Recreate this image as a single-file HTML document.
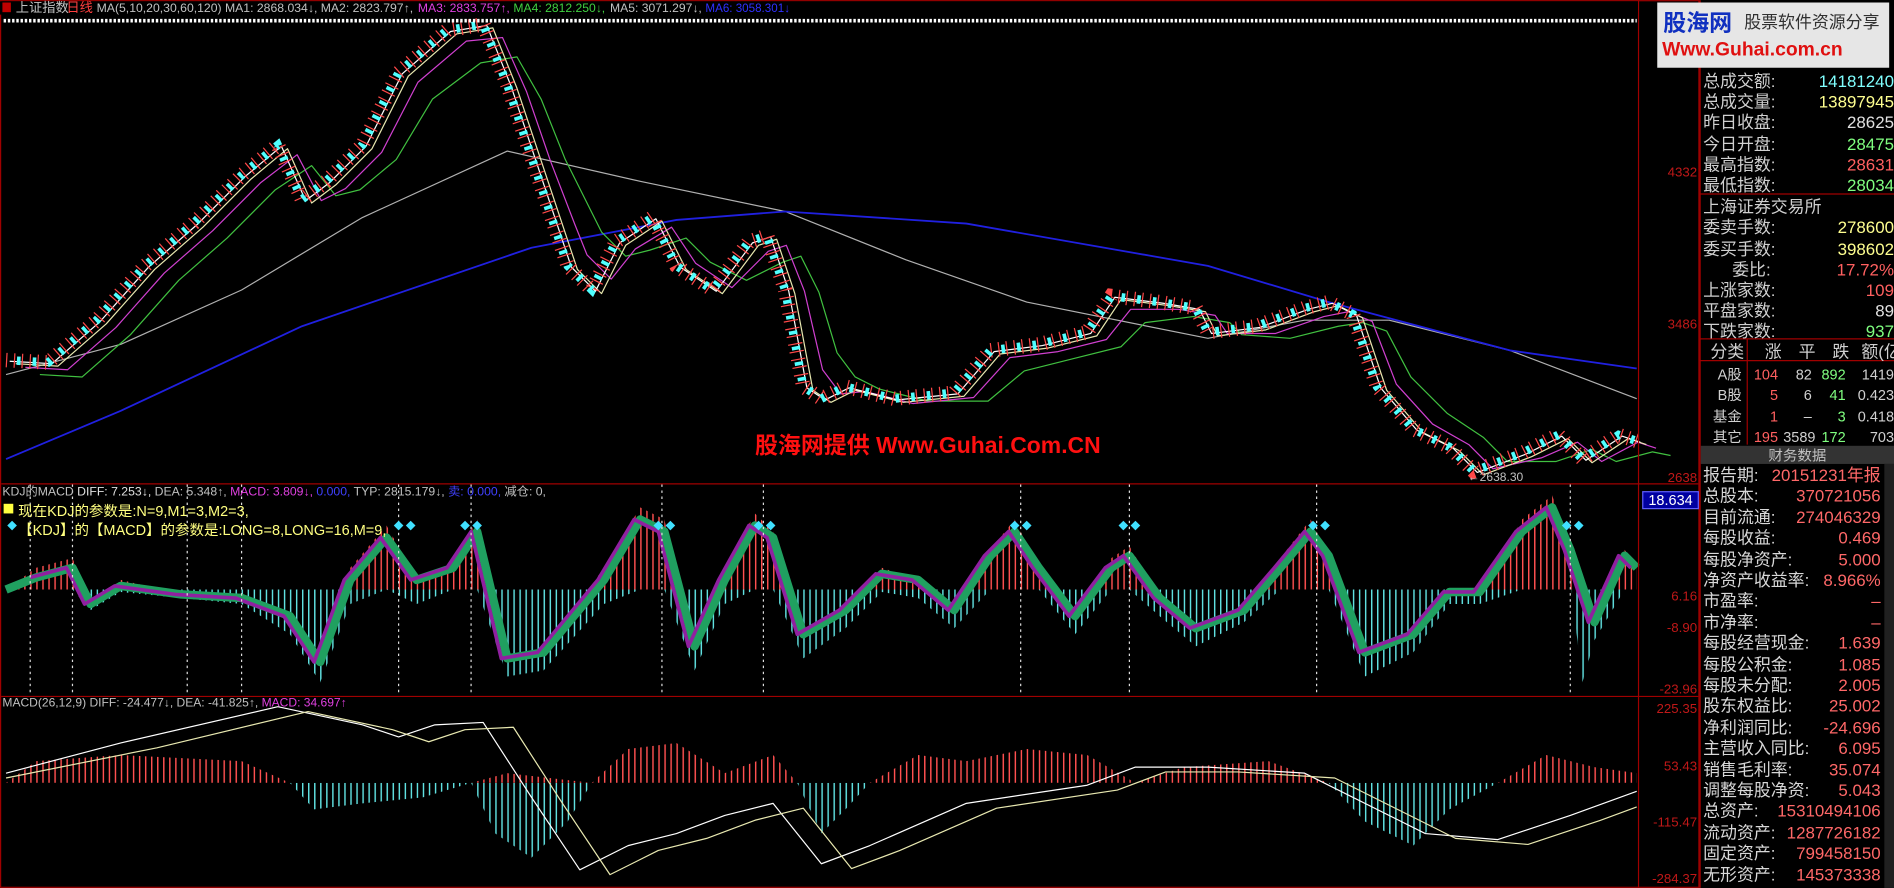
<!DOCTYPE html>
<html><head><meta charset="utf-8"><style>
html,body{margin:0;padding:0;background:#000;overflow:hidden}
svg{display:block}
text{font-family:"Liberation Sans","Noto Sans CJK SC",sans-serif}
</style></head><body>
<svg width="1894" height="888" viewBox="0 0 1568 735" xmlns="http://www.w3.org/2000/svg">
<defs>
<pattern id="pr" width="5" height="10" patternUnits="userSpaceOnUse"><rect x="0" y="0" width="1.2" height="10" fill="#ff5050"/></pattern>
<pattern id="pc" width="5" height="10" patternUnits="userSpaceOnUse"><rect x="0" y="0" width="1.2" height="10" fill="#60e0e0"/></pattern>
<clipPath id="upK"><rect x="0" y="400" width="1356" height="88"/></clipPath>
<clipPath id="dnK"><rect x="0" y="488" width="1356" height="88"/></clipPath>
<clipPath id="upM"><rect x="0" y="577" width="1356" height="71"/></clipPath>
<clipPath id="dnM"><rect x="0" y="648" width="1356" height="87"/></clipPath>
</defs>
<rect width="1568" height="735" fill="#000"/>

<polyline fill="none" stroke="#b0b0b0" stroke-width="1" stroke-linejoin="round" points="5,310 100,285 200,240 300,180 420,125 530,150 650,175 750,215 850,250 1000,280 1080,265 1150,265 1250,290 1355,330"/>
<polyline fill="none" stroke="#2020e0" stroke-width="1.5" stroke-linejoin="round" points="5,380 100,340 250,270 440,205 560,182 650,175 800,185 1000,220 1100,250 1250,290 1355,305"/>
<g fill="none" stroke-width="1" stroke-linejoin="round">
<polyline transform="translate(28,12)" stroke="#40c040" points="5,298 40,300 80,265 120,220 160,185 200,145 230,125 250,150 270,145 300,120 330,70 370,40 400,35 420,70 440,120 460,160 470,180 490,200 510,195 540,185 560,205 590,220 620,205 635,200 650,230 665,280 680,300 700,310 740,320 790,320 820,295 860,285 900,275 920,255 960,250 990,255 1000,265 1040,268 1080,258 1100,255 1120,262 1140,300 1170,330 1200,350 1220,370 1260,370 1290,360 1310,370 1340,362 1355,365"/>
<polyline transform="translate(16,6)" stroke="#d040d0" points="5,298 40,300 80,265 120,220 160,185 200,145 230,122 250,160 270,150 300,120 330,62 370,28 400,25 420,70 440,128 460,180 470,205 490,225 510,200 540,182 560,212 590,232 620,202 635,197 650,235 665,300 680,320 700,318 740,328 790,323 820,290 860,285 900,275 920,250 960,250 990,255 1000,270 1040,270 1080,256 1100,252 1120,260 1140,312 1170,345 1200,362 1220,382 1260,373 1290,360 1310,376 1340,360 1355,365"/>
<polyline transform="translate(8,3)" stroke="#e8e8b0" points="5,298 40,300 80,265 120,220 160,185 200,145 230,120 250,165 270,150 300,120 330,60 370,25 400,20 420,70 440,130 460,190 470,220 490,240 510,200 540,180 560,220 590,240 620,200 635,195 650,240 665,320 680,330 700,320 740,330 790,325 820,290 860,285 900,275 920,245 960,250 990,255 1000,275 1040,270 1080,255 1100,250 1120,260 1140,320 1170,355 1200,370 1220,390 1260,375 1290,360 1310,380 1340,360 1355,365"/>
<polyline transform="translate(3,1)" stroke="#ffffff" points="5,298 40,300 80,265 120,220 160,185 200,145 230,120 250,165 270,150 300,120 330,60 370,25 400,20 420,70 440,130 460,190 470,220 490,240 510,200 540,180 560,220 590,240 620,200 635,195 650,240 665,320 680,330 700,320 740,330 790,325 820,290 860,285 900,275 920,245 960,250 990,255 1000,275 1040,270 1080,255 1100,250 1120,260 1140,320 1170,355 1200,370 1220,390 1260,375 1290,360 1310,380 1340,360 1355,365"/>
</g>
<polyline fill="none" stroke="#ff4848" stroke-width="12" stroke-dasharray="1 5.5" points="5,298 40,300 80,265 120,220 160,185 200,145 230,120 250,165 270,150 300,120 330,60 370,25 400,20 420,70 440,130 460,190 470,220 490,240 510,200 540,180 560,220 590,240 620,200 635,195 650,240 665,320 680,330 700,320 740,330 790,325 820,290 860,285 900,275 920,245 960,250 990,255 1000,275 1040,270 1080,255 1100,250 1120,260 1140,320 1170,355 1200,370 1220,390 1260,375 1290,360 1310,380 1340,360 1355,365"/>
<polyline fill="none" stroke="#50ffff" stroke-width="7" stroke-dasharray="3 10" stroke-dashoffset="4" points="5,298 40,300 80,265 120,220 160,185 200,145 230,120 250,165 270,150 300,120 330,60 370,25 400,20 420,70 440,130 460,190 470,220 490,240 510,200 540,180 560,220 590,240 620,200 635,195 650,240 665,320 680,330 700,320 740,330 790,325 820,290 860,285 900,275 920,245 960,250 990,255 1000,275 1040,270 1080,255 1100,250 1120,260 1140,320 1170,355 1200,370 1220,390 1260,375 1290,360 1310,380 1340,360 1355,365"/>

<polygon fill="url(#pr)" clip-path="url(#upK)" points="5,488 5,488 30,470 60,462 75,500 100,480 150,492 200,495 240,510 265,548 290,470 320,435 345,480 375,465 395,430 420,545 450,540 500,470 530,420 550,430 575,535 600,470 625,425 640,440 665,525 700,505 730,470 760,480 790,505 820,455 840,430 860,470 890,510 920,462 935,452 960,495 990,520 1030,505 1060,462 1085,430 1100,460 1130,540 1170,525 1200,490 1225,490 1260,430 1285,410 1300,455 1320,515 1345,455 1355,470 1355,488"/>
<polygon fill="url(#pc)" clip-path="url(#dnK)" points="5,488 30,488 60,488 75,505 100,490 150,495 200,500 240,525 265,565 290,500 320,488 345,500 375,488 395,488 420,560 450,555 500,500 530,488 550,488 575,555 600,500 625,488 640,488 665,545 700,520 730,490 760,495 790,520 820,488 840,488 860,488 890,525 920,488 935,488 960,510 990,535 1030,515 1060,488 1085,488 1100,488 1130,560 1170,540 1200,500 1225,500 1260,488 1285,488 1300,480 1310,565 1320,530 1345,488 1355,488"/>
<polyline fill="none" stroke="#20a060" stroke-width="7" stroke-linejoin="round" points="5,488 30,478 60,470 75,500 100,485 150,492 200,495 240,510 265,548 290,480 320,445 345,480 375,470 395,440 420,545 450,540 500,480 530,430 550,440 575,535 600,480 625,435 640,445 665,525 700,505 730,475 760,480 790,505 820,460 840,440 860,470 890,510 920,470 935,460 960,495 990,520 1030,505 1060,470 1085,440 1100,460 1130,540 1170,525 1200,490 1225,490 1260,440 1285,420 1300,455 1320,515 1345,460 1355,470"/>
<polyline transform="translate(-5,0)" fill="none" stroke="#9020a0" stroke-width="3" stroke-linejoin="round" points="30,478 60,470 75,500 100,485 150,492 200,495 240,510 265,548 290,480 320,445 345,480 375,470 395,440 420,545 450,540 500,480 530,430 550,440 575,535 600,480 625,435 640,445 665,525 700,505 730,475 760,480 790,505 820,460 840,440 860,470 890,510 920,470 935,460 960,495 990,520 1030,505 1060,470 1085,440 1100,460 1130,540 1170,525 1200,490 1225,490 1260,440 1285,420 1300,455 1320,515 1345,460 1355,470"/>
<g stroke="#ddd" stroke-dasharray="2 3">
<line x1="25" y1="401" x2="25" y2="575"/><line x1="60" y1="401" x2="60" y2="575"/><line x1="155" y1="401" x2="155" y2="575"/><line x1="200" y1="401" x2="200" y2="575"/><line x1="330" y1="401" x2="330" y2="575"/><line x1="390" y1="401" x2="390" y2="575"/><line x1="548" y1="401" x2="548" y2="575"/><line x1="632" y1="401" x2="632" y2="575"/><line x1="845" y1="401" x2="845" y2="575"/><line x1="935" y1="401" x2="935" y2="575"/><line x1="1090" y1="401" x2="1090" y2="575"/><line x1="1300" y1="401" x2="1300" y2="575"/>
</g>
<g fill="#40e0ff">
<path d="M330,431l4,4l-4,4l-4,-4z M340,431l4,4l-4,4l-4,-4z M385,431l4,4l-4,4l-4,-4z M395,431l4,4l-4,4l-4,-4z M545,431l4,4l-4,4l-4,-4z M555,431l4,4l-4,4l-4,-4z M628,431l4,4l-4,4l-4,-4z M638,431l4,4l-4,4l-4,-4z M840,431l4,4l-4,4l-4,-4z M850,431l4,4l-4,4l-4,-4z M930,431l4,4l-4,4l-4,-4z M940,431l4,4l-4,4l-4,-4z M1087,431l4,4l-4,4l-4,-4z M1097,431l4,4l-4,4l-4,-4z M1297,431l4,4l-4,4l-4,-4z M1307,431l4,4l-4,4l-4,-4z M10,431l4,4l-4,4l-4,-4z"/>
</g>

<polygon fill="url(#pr)" clip-path="url(#upM)" points="5,648 30,630 100,625 200,630 240,648 390,648 420,640 490,648 520,620 560,615 600,640 640,625 660,648 720,648 760,625 800,630 850,620 900,625 940,648 980,635 1050,630 1100,648 1240,648 1280,625 1320,635 1355,640 1355,648"/>
<polygon fill="url(#pc)" clip-path="url(#dnM)" points="5,648 240,648 260,670 300,665 350,660 390,648 410,690 440,710 470,680 490,648 600,648 660,648 680,690 700,670 720,648 940,648 1100,648 1130,680 1170,700 1200,670 1240,648 1355,648"/>
<polyline fill="none" stroke="#ffffff" stroke-linejoin="round" points="5,640 100,615 230,585 300,600 330,610 360,600 400,598 440,660 480,720 520,700 560,690 600,675 640,665 680,715 720,700 800,665 900,650 940,635 1000,635 1080,640 1180,690 1240,695 1300,675 1355,655"/>
<polyline fill="none" stroke="#e8e8b0" stroke-linejoin="round" points="5,644 130,619 255,589 325,604 355,614 385,604 425,602 465,664 505,724 545,704 585,694 625,679 665,669 705,719 745,704 825,669 925,654 965,639 1025,639 1105,644 1205,694 1265,699 1325,679 1355,668"/>

<g stroke="#a00000" fill="none" stroke-width="1">
<rect x="0.5" y="0.5" width="1406" height="734"/>
<line x1="1" y1="400.5" x2="1406" y2="400.5"/>
<line x1="1" y1="576.5" x2="1406" y2="576.5"/>
<line x1="1356.5" y1="0" x2="1356.5" y2="735"/>
<line x1="1407.5" y1="0" x2="1407.5" y2="735"/>
<line x1="1407" y1="160.5" x2="1568" y2="160.5"/>
<line x1="1407" y1="280.5" x2="1568" y2="280.5"/>
<line x1="1407" y1="298.5" x2="1568" y2="298.5"/>
<line x1="1446.5" y1="281" x2="1446.5" y2="368"/>
</g>
<rect x="0" y="1" width="1356" height="11" fill="#000"/>
<g font-size="10">
<rect x="2" y="2" width="7" height="8" fill="#c00000"/>
<text x="13" y="10" fill="#c0c0c0" font-size="11">上证指数</text>
<text x="55" y="10" fill="#ff4040" font-size="11">日线</text>
<text x="80" y="10" fill="#c0c0c0" textLength="262" lengthAdjust="spacingAndGlyphs">MA(5,10,20,30,60,120)  MA1: 2868.034↓, MA2: 2823.797↑,</text>
<text x="346" y="10" fill="#e040e0" textLength="76" lengthAdjust="spacingAndGlyphs">MA3: 2833.757↑,</text>
<text x="425" y="10" fill="#40d040" textLength="76" lengthAdjust="spacingAndGlyphs">MA4: 2812.250↓,</text>
<text x="505" y="10" fill="#c0c0c0" textLength="76" lengthAdjust="spacingAndGlyphs">MA5: 3071.297↓,</text>
<text x="584" y="10" fill="#3030ff" textLength="70" lengthAdjust="spacingAndGlyphs">MA6: 3058.301↓</text>
<text x="2" y="410" fill="#c0c0c0" textLength="450" lengthAdjust="spacingAndGlyphs">KDJ的MACD  <tspan fill="#e0e0e0">DIFF: 7.253↓,</tspan> <tspan fill="#c0c0c0">DEA: 5.348↑,</tspan> <tspan fill="#e040e0">MACD: 3.809↓,</tspan> <tspan fill="#4040ff">0.000,</tspan> TYP: 2815.179↓, <tspan fill="#4040ff">卖: 0.000,</tspan> 减仓: 0,</text>
<rect x="3" y="417" width="8" height="8" fill="#ffff40"/>
<text x="15" y="427" fill="#ffff80" font-size="12">现在KDJ的参数是:N=9,M1=3,M2=3,</text>
<text x="15" y="443" fill="#ffff80" font-size="12">【KDJ】的【MACD】的参数是:LONG=8,LONG=16,M=9,</text>
<text x="2" y="585" fill="#c0c0c0" textLength="285" lengthAdjust="spacingAndGlyphs">MACD(26,12,9) DIFF: -24.477↓, DEA: -41.825↑, <tspan fill="#e040e0">MACD: 34.697↑</tspan></text>
</g>
<line x1="3" y1="17" x2="1355" y2="17" stroke="#fff" stroke-width="3" stroke-dasharray="2 1.5"/>
<text x="625" y="375" fill="#ff1010" font-size="19" font-weight="bold">股海网提供 Www.Guhai.Com.CN</text>
<g fill="#c01818" font-size="11" text-anchor="end">
<text x="1405" y="146">4332</text><text x="1405" y="272">3486</text><text x="1405" y="399">2638</text>
<text x="1405" y="497">6.16</text><text x="1405" y="523">-8.90</text><text x="1405" y="574">-23.96</text>
<text x="1405" y="590">225.35</text><text x="1405" y="638">53.43</text><text x="1405" y="684">-115.47</text><text x="1405" y="731">-284.37</text>
</g>
<rect x="1360" y="407" width="46" height="14" fill="#0000a0" stroke="#6060ff"/>
<text x="1383" y="418" fill="#fff" font-size="12" text-anchor="middle">18.634</text>
<text x="1215" y="398" fill="#c0c0c0" font-size="10">←2638.30</text>
<text x="1410" y="50" fill="#d0d0d0" font-size="14">指数涨幅:</text>
<rect x="1372" y="2" width="192" height="54" fill="#e6e6e6"/>
<text x="1377" y="25" fill="#1030c0" font-size="19" font-weight="bold">股海网</text>
<text x="1444" y="23" fill="#303030" font-size="14">股票软件资源分享</text>
<text x="1376" y="46" fill="#e01010" font-size="16" font-weight="bold">Www.Guhai.com.cn</text>
<g font-size="14" fill="#d0d0d0">
<text x="1410" y="72">总成交额:</text><text x="1568" y="72" fill="#80ffff" text-anchor="end">14181240</text>
<text x="1410" y="89">总成交量:</text><text x="1568" y="89" fill="#ffff90" text-anchor="end">13897945</text>
<text x="1410" y="106">昨日收盘:</text><text x="1568" y="106" fill="#e0e0e0" text-anchor="end">28625</text>
<text x="1410" y="124">今日开盘:</text><text x="1568" y="124" fill="#80ff80" text-anchor="end">28475</text>
<text x="1410" y="141">最高指数:</text><text x="1568" y="141" fill="#ff6060" text-anchor="end">28631</text>
<text x="1410" y="158">最低指数:</text><text x="1568" y="158" fill="#80ff80" text-anchor="end">28034</text>
<text x="1410" y="176">上海证券交易所</text>
<text x="1410" y="193">委卖手数:</text><text x="1568" y="193" fill="#ffff90" text-anchor="end">278600</text>
<text x="1410" y="211">委买手数:</text><text x="1568" y="211" fill="#ffff90" text-anchor="end">398602</text>
<text x="1434" y="228">委比:</text><text x="1568" y="228" fill="#ff6060" text-anchor="end">17.72%</text>
<text x="1410" y="245">上涨家数:</text><text x="1568" y="245" fill="#ff6060" text-anchor="end">109</text>
<text x="1410" y="262">平盘家数:</text><text x="1568" y="262" fill="#e0e0e0" text-anchor="end">89</text>
<text x="1410" y="279">下跌家数:</text><text x="1568" y="279" fill="#80ff80" text-anchor="end">937</text>
<text x="1416" y="296">分类</text><text x="1461" y="296">涨</text><text x="1489" y="296">平</text><text x="1517" y="296">跌</text><text x="1541" y="296">额(亿</text>
<g font-size="12">
<text x="1442" y="314" text-anchor="end">A股</text><text x="1472" y="314" fill="#ff6060" text-anchor="end">104</text><text x="1500" y="314" text-anchor="end">82</text><text x="1528" y="314" fill="#80ff80" text-anchor="end">892</text><text x="1568" y="314" text-anchor="end">1419</text>
<text x="1442" y="331" text-anchor="end">B股</text><text x="1472" y="331" fill="#ff6060" text-anchor="end">5</text><text x="1500" y="331" text-anchor="end">6</text><text x="1528" y="331" fill="#80ff80" text-anchor="end">41</text><text x="1568" y="331" text-anchor="end">0.423</text>
<text x="1442" y="349" text-anchor="end">基金</text><text x="1472" y="349" fill="#ff6060" text-anchor="end">1</text><text x="1500" y="349" text-anchor="end">–</text><text x="1528" y="349" fill="#80ff80" text-anchor="end">3</text><text x="1568" y="349" text-anchor="end">0.418</text>
<text x="1442" y="366" text-anchor="end">其它</text><text x="1472" y="366" fill="#ff6060" text-anchor="end">195</text><text x="1503" y="366" text-anchor="end">3589</text><text x="1528" y="366" fill="#80ff80" text-anchor="end">172</text><text x="1568" y="366" text-anchor="end">703</text>
</g>
</g>
<rect x="1408" y="369" width="160" height="15" fill="#333"/>
<text x="1488" y="381" fill="#c0c0c0" font-size="12" text-anchor="middle">财务数据</text>
<g font-size="14" fill="#d8d8d8">
<text x="1410" y="398">报告期:</text><text x="1557" y="398" fill="#ff6868" text-anchor="end">20151231年报</text>
<text x="1410" y="415">总股本:</text><text x="1557" y="415" fill="#ff6868" text-anchor="end">370721056</text>
<text x="1410" y="433">目前流通:</text><text x="1557" y="433" fill="#ff6868" text-anchor="end">274046329</text>
<text x="1410" y="450">每股收益:</text><text x="1557" y="450" fill="#ff6868" text-anchor="end">0.469</text>
<text x="1410" y="468">每股净资产:</text><text x="1557" y="468" fill="#ff6868" text-anchor="end">5.000</text>
<text x="1410" y="485">净资产收益率:</text><text x="1557" y="485" fill="#ff6868" text-anchor="end">8.966%</text>
<text x="1410" y="502">市盈率:</text><text x="1557" y="502" fill="#ff6868" text-anchor="end">–</text>
<text x="1410" y="520">市净率:</text><text x="1557" y="520" fill="#ff6868" text-anchor="end">–</text>
<text x="1410" y="537">每股经营现金:</text><text x="1557" y="537" fill="#ff6868" text-anchor="end">1.639</text>
<text x="1410" y="555">每股公积金:</text><text x="1557" y="555" fill="#ff6868" text-anchor="end">1.085</text>
<text x="1410" y="572">每股未分配:</text><text x="1557" y="572" fill="#ff6868" text-anchor="end">2.005</text>
<text x="1410" y="589">股东权益比:</text><text x="1557" y="589" fill="#ff6868" text-anchor="end">25.002</text>
<text x="1410" y="607">净利润同比:</text><text x="1557" y="607" fill="#ff6868" text-anchor="end">-24.696</text>
<text x="1410" y="624">主营收入同比:</text><text x="1557" y="624" fill="#ff6868" text-anchor="end">6.095</text>
<text x="1410" y="642">销售毛利率:</text><text x="1557" y="642" fill="#ff6868" text-anchor="end">35.074</text>
<text x="1410" y="659">调整每股净资:</text><text x="1557" y="659" fill="#ff6868" text-anchor="end">5.043</text>
<text x="1410" y="676">总资产:</text><text x="1557" y="676" fill="#ff6868" text-anchor="end">15310494106</text>
<text x="1410" y="694">流动资产:</text><text x="1557" y="694" fill="#ff6868" text-anchor="end">1287726182</text>
<text x="1410" y="711">固定资产:</text><text x="1557" y="711" fill="#ff6868" text-anchor="end">799458150</text>
<text x="1410" y="729">无形资产:</text><text x="1557" y="729" fill="#ff6868" text-anchor="end">145373338</text>
</g>
<rect x="1560" y="384" width="8" height="351" fill="#202020"/>
</svg>
</body></html>
